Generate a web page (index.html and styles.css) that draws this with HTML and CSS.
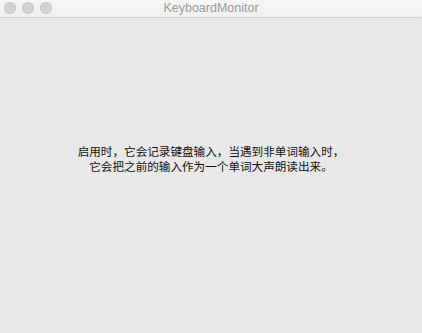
FILE: index.html
```html
<!DOCTYPE html>
<html lang="zh">
<head>
    <meta charset="UTF-8">
    <meta name="viewport" content="width=device-width, initial-scale=1.0">
    <title>KeyboardMonitor</title>
    <link rel="stylesheet" href="styles.css">
</head>
<body>
<div class="window">
    <div class="titlebar">
        <div class="lights">
            <span class="light"></span>
            <span class="light"></span>
            <span class="light"></span>
        </div>
        <div class="title">KeyboardMonitor</div>
    </div>
    <div class="content">
        <p class="message">启用时，它会记录键盘输入，当遇到非单词输入时，<br>它会把之前的输入作为一个单词大声朗读出来。</p>
    </div>
</div>
</body>
</html>
```

FILE: styles.css
```css
html, body {
    margin: 0;
    padding: 0;
    height: 100%;
}

body {
    font-family: "Liberation Sans", "Noto Sans CJK SC", sans-serif;
    background-color: #e8e8e8;
}

.window {
    display: flex;
    flex-direction: column;
    height: 100%;
}

.titlebar {
    position: relative;
    height: 17px;
    background: linear-gradient(#f6f6f6, #f0f0f0);
    border-bottom: 1px solid #d4d4d4;
    display: flex;
    align-items: center;
    justify-content: center;
}

.lights {
    position: absolute;
    left: 4px;
    top: 2px;
    display: flex;
    gap: 6px;
}

.light {
    width: 12px;
    height: 12px;
    border-radius: 50%;
    background-color: #d2d2d2;
    box-shadow: inset 0 0 0 1px #cacaca;
}

.title {
    font-size: 12.5px;
    color: #9a9a9a;
    line-height: 17px;
}

.content {
    flex: 1;
    display: flex;
    justify-content: center;
    padding-top: 126px;
}

.message {
    margin: 0;
    font-size: 11.6px;
    line-height: 15px;
    text-align: center;
    color: #111;
}
```
